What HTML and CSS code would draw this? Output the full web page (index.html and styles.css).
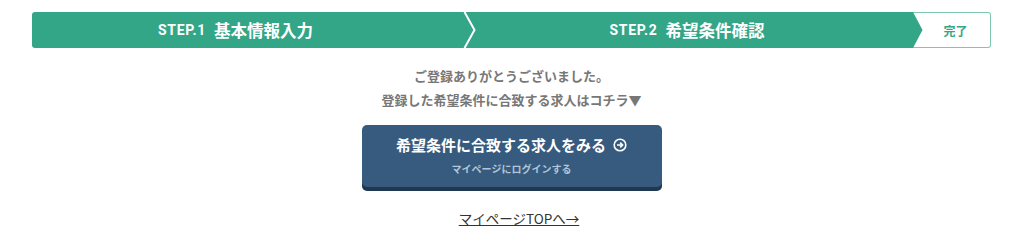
FILE: index.html
```html
<!DOCTYPE html>
<html lang="ja">
<head>
<meta charset="UTF-8">
<meta name="viewport" content="width=device-width, initial-scale=1.0">
<title>登録完了</title>
<link rel="stylesheet" href="styles.css">
</head>
<body>
<div id="page">
  <div class="steps">
    <div class="step step-first"><span class="step-no">STEP.1</span>基本情報入力</div>
    <svg class="step-sep" width="14" height="36" viewBox="0 0 14 36">
      <polyline points="1.5,0 11.5,18 1.5,36" fill="none" stroke="#fff" stroke-width="2"/>
    </svg>
    <div class="step step-second"><span class="step-no">STEP.2</span>希望条件確認</div>
    <div class="step-last">
      <svg class="step-arrow" width="10" height="36" viewBox="0 0 10 36">
        <polygon points="0,0 9.5,18 0,36" fill="#34a688"/>
      </svg>
      <span class="step-done">完了</span>
    </div>
  </div>

  <div class="message">
    <p>ご登録ありがとうございました。</p>
    <p>登録した希望条件に合致する求人はコチラ▼</p>
  </div>

  <a class="job-btn" href="#">
    <span class="job-btn-main">希望条件に合致する求人をみる
      <svg class="job-btn-icon" width="14" height="14" viewBox="0 0 14 14">
        <circle cx="7" cy="7" r="5.8" fill="none" stroke="#fff" stroke-width="1.6"/>
        <path d="M4 7h5.5M7.2 4.6L9.6 7 7.2 9.4" fill="none" stroke="#fff" stroke-width="1.6"/>
      </svg>
    </span>
    <span class="job-btn-sub">マイページにログインする</span>
  </a>

  <div class="top-link-row">
    <a class="top-link" href="#">マイページTOPへ→</a>
  </div>
</div>
</body>
</html>
```

FILE: styles.css
```css
body {
  margin: 0;
  padding: 0;
  background-color: #fff;
  font-family: "Noto Sans CJK JP", "Noto Sans", sans-serif;
  color: #333;
}

#page {
  width: 959px;
  margin-left: 32px;
  padding-top: 12px;
  text-align: center;
}

/* Step bar */
.steps {
  display: flex;
  height: 36px;
}

.step {
  display: flex;
  align-items: center;
  justify-content: center;
  background-color: #34a688;
  color: #fff;
  font-size: 16.5px;
  font-weight: bold;
  line-height: 1;
}

.step-first {
  width: 431px;
  padding-right: 24px;
  box-sizing: border-box;
  border-radius: 3px 0 0 3px;
}

.step-second {
  flex: 1;
  padding-right: 16px;
}

.step-no {
  font-family: "Roboto", "Liberation Sans", sans-serif;
  font-size: 14px;
  letter-spacing: 0.7px;
  margin-right: 8px;
}

.step-sep {
  display: block;
  background-color: #34a688;
}

.step-last {
  display: flex;
  align-items: center;
  width: 78px;
  box-sizing: border-box;
  border: 1px solid #7dc9ae;
  border-left: none;
  border-radius: 0 3px 3px 0;
}

.step-arrow {
  display: block;
  margin-top: -1px;
  margin-bottom: -1px;
}

.step-done {
  flex: 1;
  color: #34a688;
  font-size: 12px;
  font-weight: bold;
  padding-right: 2px;
}

/* Message */
.message {
  margin-top: 16px;
  color: #777;
  font-size: 13px;
  font-weight: bold;
}

.message p {
  margin: 0;
  line-height: 24px;
}

/* Button */
.job-btn {
  display: flex;
  flex-direction: column;
  align-items: center;
  width: 300px;
  height: 62px;
  margin: 13px auto 0;
  box-sizing: border-box;
  padding-top: 9px;
  background-color: #375b7e;
  border-radius: 5px;
  box-shadow: 0 4px 0 #1e3850;
  text-decoration: none;
}

.job-btn-main {
  display: flex;
  align-items: center;
  color: #fff;
  font-size: 15px;
  font-weight: bold;
  line-height: 22px;
}

.job-btn-icon {
  margin-left: 7px;
}

.job-btn-sub {
  margin-top: 6px;
  color: #b3c5d8;
  font-size: 10px;
  font-weight: bold;
  line-height: 14px;
}

/* Link */
.top-link-row {
  margin-top: 18px;
  padding-left: 15px;
}

.top-link {
  color: #333;
  font-size: 13.5px;
  text-decoration: underline;
}
```
